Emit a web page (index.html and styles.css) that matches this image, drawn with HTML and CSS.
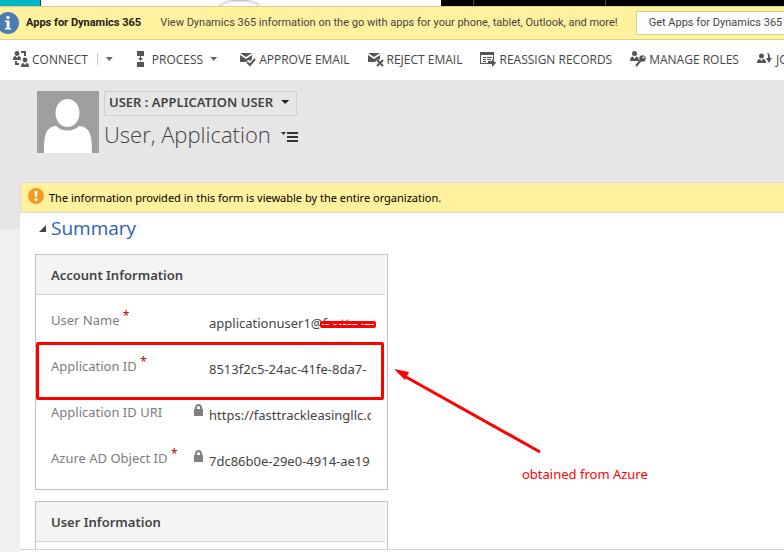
FILE: index.html
```html
<!DOCTYPE html>
<html lang="en">
<head>
<meta charset="utf-8">
<title>User: Application User</title>
<link rel="stylesheet" href="styles.css">
</head>
<body>
<div class="topnav">
  <span class="topnav-brand"></span>
  <svg class="topnav-logo" viewBox="0 0 50 6" aria-hidden="true"><path d="M4 6C13-1 34-3 45 6" fill="none" stroke="#e0e2f0" stroke-width="3"/><path d="M15 0h20l-4 1H19z" fill="#b9bfdd"/></svg>
  <span class="topnav-menu"><i></i><i></i></span>
</div>
<div class="appbar">
  <svg class="info-icon" viewBox="0 0 22 22" aria-hidden="true"><circle cx="11" cy="11" r="11" fill="#4a7db5"/><circle cx="11" cy="5.500" r="1.700" fill="#fff"/><path d="M8 8.500h4.500V16H14v1.500H8V16h1.700v-6H8z" fill="#fff"/></svg>
  <strong class="appbar-title">Apps for Dynamics 365</strong>
  <span class="appbar-text">View Dynamics 365 information on the go with apps for your phone, tablet, Outlook, and more!</span>
  <button class="appbar-button" type="button">Get Apps for Dynamics 365</button>
</div>
<nav class="commands">
  <button type="button"><svg viewBox="0 0 16 16"><circle cx="4" cy="2.500" r="2.400"/><path d="M0 9c0-3 1-4 2.500-4L4 7l1.500-2C7 5 8 6 8 9zM8 0h5v5h-2V2H8zM2 10h2v2h2v2H2zM8 16c0-3 1-4 2.500-4l1.500 2 1.500-2c1.500 0 2.500 1 2.500 4z"/><circle cx="12" cy="9" r="2.400"/></svg>CONNECT</button>
  <span class="divider"></span>
  <button type="button" class="drop" aria-label="Connect options"><i class="caret"></i></button>
  <button type="button" class="process"><svg class="slim" viewBox="0 0 9 16"><path d="M1 0h7v5H1zM1 11h7v5H1zM4 5h1v2h2L4.500 10 2 7h2z"/></svg>PROCESS<i class="caret"></i></button>
  <button type="button" class="approve"><svg viewBox="0 0 16 16"><path d="M0 2h12L6 6zM0 4l6 4 6-4v4l-3 3H0z"/><path d="M7 10l3 4 5-6" fill="none" stroke="#fff" stroke-width="4"/><path d="M7 11l3 3 5-6" fill="none" stroke="#555" stroke-width="2"/></svg>APPROVE EMAIL</button>
  <button type="button"><svg viewBox="0 0 16 16"><path d="M0 2h12L6 6zM0 4l6 4 6-4v4l-3 3H0z"/><path d="M8.500 9.500l6 6m0-6l-6 6" fill="none" stroke="#fff" stroke-width="4"/><path d="M9 9l6 6m0-6l-6 6" fill="none" stroke="#555" stroke-width="2"/></svg>REJECT EMAIL</button>
  <button type="button"><svg viewBox="0 0 16 16"><path d="M0 1h14v3H0zM0 4h1v8h8v1H0zM13 4h1v5h-1zM3 6h3v1H3zM7 6h5v1H7zM3 8h3v1H3zM7 8h4v1H7zM3 10h3v1H3zM8 10h4V8l4 4-4 4v-3H8z"/></svg>REASSIGN RECORDS</button>
  <button type="button"><svg viewBox="0 0 16 16"><circle cx="4.500" cy="2.500" r="2.500"/><path d="M0 10c0-3 1-4.500 3-4.500L4.500 8 6 5.500c2 0 3 1.500 3 4.500z"/><circle cx="12.500" cy="7.500" r="3.200"/><path d="M11 9l-5 6" stroke="#555" stroke-width="2"/><circle cx="13.500" cy="6.500" r="1" fill="#fff"/></svg>MANAGE ROLES</button>
  <button type="button"><svg viewBox="0 0 16 16"><circle cx="4.500" cy="5" r="2.500"/><path d="M0 12c0-3 1-4 3-4l1.500 2L6 8c2 0 3 1 3 4zM10 2c2 0 3 1 3 5h2l-3 5-3-5h2c0-3 0-4-1-5z"/></svg>JOIN TEAMS</button>
</nav>
<header class="record">
  <svg class="avatar" viewBox="0 0 62 62" role="img" aria-label="User picture"><path d="M0 0h62v62H0z" fill="#9e9e9e"/><path d="M7 62c0-16 1-26 12-27 6 6 17 6 23 0 12 1 13 11 13 27z" fill="#fff"/><ellipse cx="30.500" cy="22" rx="13" ry="15" fill="#9e9e9e"/><ellipse cx="30.500" cy="22" rx="12" ry="14" fill="#fff"/></svg>
  <div>
    <button type="button" class="entity">USER : APPLICATION USER<i class="caret"></i></button>
    <h1>User, Application <svg viewBox="0 0 17 12" aria-hidden="true"><path d="M0 1h5L2.500 4zM6 1h11v2H6zM6 5h11v2H6zM6 9h11v2H6z"/></svg></h1>
  </div>
</header>
<div class="body">
  <aside class="rail"></aside>
  <main class="form">
    <p class="notice"><svg viewBox="0 0 16 16" aria-hidden="true"><circle cx="8" cy="8" r="8" fill="#f39c1f"/><path d="M6.500 3h3L9 9H7z" fill="#fff"/><circle cx="8" cy="11.500" r="1.500" fill="#fff"/></svg>The information provided in this form is viewable by the entire organization.</p>
    <h2><svg viewBox="0 0 7 7" aria-hidden="true"><path d="M7 0v7H0z"/></svg>Summary</h2>
    <div class="columns">
      <div class="sections">
        <section class="card">
          <h3>Account Information</h3>
          <div class="fields">
            <div class="field"><label for="un">User Name <sup>*</sup></label><span class="lock"></span><span class="value"><input id="un" readonly value="applicationuser1@fasttrac"><i class="redaction"></i></span></div>
            <div class="field marked"><label for="ai">Application ID <sup>*</sup></label><span class="lock"></span><span class="value"><input id="ai" readonly value="8513f2c5-24ac-41fe-8da7-"></span></div>
            <div class="field"><label for="au">Application ID URI</label><svg class="lock" viewBox="0 0 9 12"><path d="M0 5h9v7H0z"/><path d="M2 6V3.500a2.500 2.500 0 0 1 5 0V6" fill="none" stroke="#808080" stroke-width="2"/></svg><span class="value"><input id="au" readonly value="https://fasttrackleasingllc.com"></span></div>
            <div class="field"><label for="ao">Azure AD Object ID <sup>*</sup></label><svg class="lock" viewBox="0 0 9 12"><path d="M0 5h9v7H0z"/><path d="M2 6V3.500a2.500 2.500 0 0 1 5 0V6" fill="none" stroke="#808080" stroke-width="2"/></svg><span class="value"><input id="ao" readonly value="7dc86b0e-29e0-4914-ae19"></span></div>
          </div>
        </section>
        <section class="card">
          <h3>User Information</h3>
          <div class="fields"></div>
        </section>
      </div>
      <div class="callout">
        <svg viewBox="0 0 150 86" aria-hidden="true"><path d="M12 8l134 75" stroke="red" stroke-width="3"/><path d="M0 0l15 3-4 8z" fill="red"/></svg>
        <p>obtained from Azure</p>
      </div>
    </div>
  </main>
</div>
<footer class="status"></footer>
</body>
</html>
```
FILE: styles.css
```css
* { box-sizing: border-box; }
body {
  margin: 0;
  height: 100vh;
  display: flex;
  flex-direction: column;
  overflow: hidden;
  background: #fff;
  color: #444;
  font-family: "Noto Sans", "Open Sans", sans-serif;
  font-size: 12px;
}
button { font: inherit; color: inherit; border: 0; padding: 0; background: none; white-space: nowrap; }
h1, h2, h3, p { margin: 0; font-weight: 400; }
svg { flex: none; }
.caret { width: 8px; height: 4px; background: currentColor; clip-path: polygon(0 0, 100% 0, 50% 100%); }

.topnav { display: flex; flex: none; height: 6px; }
.topnav-brand { width: 41px; background: #00b7c3; border-right: 1px solid #333; }
.topnav-logo { width: 50px; height: 6px; margin-left: 174px; }
.topnav-menu { display: flex; flex: 1; margin-left: 176px; padding-left: 32px; gap: 131px; background: #000; }
.topnav-menu i { width: 1px; background: #444; }

.appbar {
  display: flex; flex: none; align-items: center;
  height: 34px;
  padding-bottom: 1px;
  background: #fff19d;
  border: solid #d3d38a; border-width: 1px 0;
  font-family: Roboto, sans-serif;
  font-size: 11px; white-space: nowrap; overflow: hidden;
}
.info-icon { width: 22px; height: 22px; margin-left: -3px; }
.appbar-title { margin-left: 7px; color: #222; }
.appbar-text { margin-left: 19px; }
.appbar-button { height: 24px; margin-left: 18px; padding: 0 12px; background: #fff; border: 1px solid #d3d38a; }

.commands { display: flex; flex: none; align-items: center; height: 40px; padding: 0 0 2px 13px; gap: 18px; overflow: hidden; font-family: "Open Sans", sans-serif; }
.commands button { display: flex; flex: none; align-items: center; gap: 3px; }
.commands svg { width: 16px; height: 16px; fill: #555; }
.commands svg.slim { width: 9px; }
.commands .caret { width: 7px; background: #666; }
.commands .divider { flex: none; width: 1px; height: 12px; margin-left: -9px; background: #ccc; }
.commands .drop { margin-left: -10px; }
.commands .process { gap: 7px; margin-left: 5px; }
.commands .approve { margin-left: 5px; }

.record { display: flex; flex: none; gap: 5px; height: 102px; padding: 11px 37px; background: #e6e6e6; }
.avatar { width: 62px; height: 62px; }
.entity { display: flex; align-items: center; gap: 8px; height: 25px; padding: 0 7px 3px 4px; border: 1px solid #d2d2d2; font-size: 13px; font-weight: 600; }
.entity .caret { background: #222; }
.record h1 { font-family: "Open Sans", sans-serif; font-size: 22px; font-weight: 300; line-height: 36px; white-space: nowrap; }
.record h1 svg { width: 17px; height: 12px; margin-left: 4px; fill: #333; }

.body { display: flex; flex: 1; min-height: 0; }
.rail { width: 20px; flex: none; background: #f0f0f0; border-top: 48px solid #e6e6e6; }
.form { flex: 1; min-width: 0; overflow: hidden; }
.notice { display: flex; align-items: center; gap: 5px; height: 31px; padding-left: 7px; background: #fff19d; border: 1px solid #d8dbe3; border-right: 0; color: #000; font-size: 11px; }
.notice svg { width: 16px; height: 16px; margin-bottom: 4px; }
.form h2 { display: flex; align-items: center; gap: 5px; height: 30px; padding-left: 19px; color: #2b5fb8; font-family: "Open Sans", sans-serif; font-size: 19px; }
.form h2 svg { width: 7px; height: 7px; fill: #444; }

.columns { display: flex; padding: 11px 15px 0; }
.sections { display: grid; gap: 11px; width: 353px; }
.card { border: 1px solid #bfc2c5; }
.card h3 { height: 40px; margin-right: 2px; padding-left: 15px; line-height: 40px; background: #f4f4f4; border-bottom: 1px solid #d2d2d2; font-size: 13px; font-weight: 600; }
.fields { padding: 2px 0 8px; min-height: 20px; }
.field { position: relative; display: flex; height: 46px; padding: 13px 15px 0; font-size: 13px; }
.field label { width: 143px; color: #7d7d7d; line-height: 20px; white-space: nowrap; }
.field sup { color: #c00000; font-size: 12px; line-height: 0; vertical-align: 5px; }
.lock { flex: none; width: 9px; height: 12px; margin: 2px 6px 0 0; fill: #808080; }
.value { position: relative; width: 162px; }
.value input { display: block; width: 100%; height: 26px; padding: 0; border: 0; outline: 0; background: none; font: inherit; color: #444; }
.redaction { position: absolute; left: 111px; right: -5px; top: 11px; height: 7px; border: solid red; border-width: 3px 2px; border-radius: 2px; }
.marked::after { content: ""; position: absolute; inset: -1px 3px -11px 0; border: 3px solid red; border-radius: 2px; }

.callout { padding: 115px 0 0 6px; color: #f00; font-size: 13px; }
.callout svg { display: block; width: 150px; height: 86px; }
.callout p { padding: 10px 0 0 128px; white-space: nowrap; }

.status { flex: none; height: 3px; margin-left: 20px; border-top: 1px solid #d2d2d2; box-shadow: -20px 0 #f0f0f0; }
```
